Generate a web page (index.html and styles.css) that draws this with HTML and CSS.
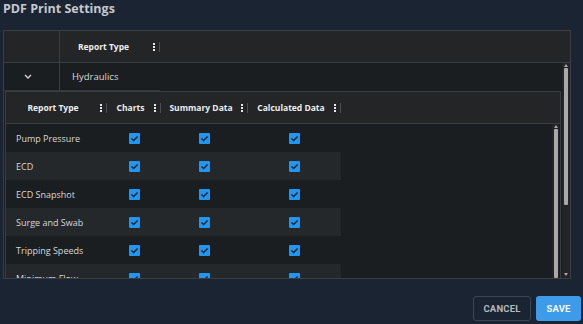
FILE: index.html
```html
<!DOCTYPE html>
<html>
<head>
<meta charset="utf-8">
<link rel="stylesheet" href="styles.css">
</head>
<body>
<h1 class="title">PDF Print Settings</h1>
<div class="outer">
  <div class="outer-head">
    <div class="ocell-exp"></div>
    <div class="hcell ocol-type"><span class="htext">Report Type</span><span class="menu"><i></i><i></i><i></i></span><span class="sep"></span></div>
  </div>
  <div class="outer-body">
    <div class="outer-view">
      <div class="hyd-row">
        <div class="ocell-exp chev"><svg width="8" height="5" viewBox="0 0 8 5"><path d="M1 1 L4 4 L7 1" fill="none" stroke="#d4d6d8" stroke-width="1.3"/></svg></div>
        <div class="ocell-name">Hydraulics</div>
      </div>
      <div class="detail">
        <div class="inner">
          <div class="inner-head">
            <div class="hcell c1"><span class="htext">Report Type</span><span class="menu"><i></i><i></i><i></i></span><span class="sep"></span></div>
            <div class="hcell c2"><span class="htext">Charts</span><span class="menu"><i></i><i></i><i></i></span><span class="sep"></span></div>
            <div class="hcell c3"><span class="htext">Summary Data</span><span class="menu"><i></i><i></i><i></i></span><span class="sep"></span></div>
            <div class="hcell c4"><span class="htext">Calculated Data</span><span class="menu"><i></i><i></i><i></i></span><span class="sep"></span></div>
          </div>
          <div class="inner-body">
            <div class="rows">
              <div class="row"><div class="cell c1">Pump Pressure</div><div class="cell c2"><span class="cb"></span></div><div class="cell c3"><span class="cb"></span></div><div class="cell c4"><span class="cb"></span></div></div>
              <div class="row alt"><div class="cell c1">ECD</div><div class="cell c2"><span class="cb"></span></div><div class="cell c3"><span class="cb"></span></div><div class="cell c4"><span class="cb"></span></div></div>
              <div class="row"><div class="cell c1">ECD Snapshot</div><div class="cell c2"><span class="cb"></span></div><div class="cell c3"><span class="cb"></span></div><div class="cell c4"><span class="cb"></span></div></div>
              <div class="row alt"><div class="cell c1">Surge and Swab</div><div class="cell c2"><span class="cb"></span></div><div class="cell c3"><span class="cb"></span></div><div class="cell c4"><span class="cb"></span></div></div>
              <div class="row"><div class="cell c1">Tripping Speeds</div><div class="cell c2"><span class="cb"></span></div><div class="cell c3"><span class="cb"></span></div><div class="cell c4"><span class="cb"></span></div></div>
              <div class="row alt"><div class="cell c1">Minimum Flow</div><div class="cell c2"><span class="cb"></span></div><div class="cell c3"><span class="cb"></span></div><div class="cell c4"><span class="cb"></span></div></div>
            </div>
            <div class="sbar inner-sbar">
              <span class="arr up"></span>
              <span class="thumb full"></span>
            </div>
          </div>
        </div>
      </div>
    </div>
    <div class="sbar outer-sbar">
      <span class="arr up"></span>
      <span class="thumb part"></span>
      <span class="track"></span>
      <span class="arr down"></span>
    </div>
  </div>
</div>
<div class="actions">
  <button class="btn cancel">CANCEL</button>
  <button class="btn save">SAVE</button>
</div>
</body>
</html>
```

FILE: styles.css
```css
* { box-sizing: border-box; }
html, body { margin: 0; padding: 0; }
body {
  width: 583px;
  height: 324px;
  overflow: hidden;
  background: #1a2432;
  font-family: "Open Sans", "Noto Sans", sans-serif;
  color: #d2d4d6;
}
.title {
  margin: 0;
  height: 30px;
  padding: 1px 0 0 3px;
  font-size: 12.5px;
  line-height: 16px;
  font-weight: 700;
  color: #c5c8cc;
}
.outer {
  margin-left: 3px;
  width: 568px;
  height: 249px;
  border: 1px solid #3a3d41;
  background: #1b1e20;
  display: flex;
  flex-direction: column;
  overflow: hidden;
}
.outer-head {
  height: 32px;
  flex: none;
  background: #232527;
  border-bottom: 1px solid #3a3d41;
  display: flex;
}
.ocell-exp {
  width: 56px;
  border-right: 1px solid #3a3d41;
  display: flex;
  align-items: center;
  justify-content: center;
}
.ocell-exp.chev { justify-content: flex-start; padding-left: 20px; }
.hcell {
  display: flex;
  align-items: center;
  font-size: 8.5px;
  font-weight: 700;
  color: #eceeef;
  height: 100%;
}
.htext { flex: 1; text-align: center; white-space: nowrap; }
.menu {
  width: 2px;
  display: flex;
  flex-direction: column;
  gap: 1px;
  margin-right: 4px;
}
.menu i { display: block; width: 2px; height: 2px; background: #e6e8ea; }
.sep { width: 1px; height: 10px; background: #4a4d51; }
.ocol-type { width: 100px; }
.ocol-type .htext { padding-right: 6px; }
.outer-body { flex: 1; display: flex; min-height: 0; }
.outer-view { flex: 1; display: flex; flex-direction: column; min-width: 0; }
.hyd-row {
  width: 156px;
  height: 28px;
  flex: none;
  display: flex;
  border-bottom: 1px solid #34373b;
}
.ocell-name {
  padding-left: 12px;
  display: flex;
  align-items: center;
  font-size: 9.5px;
  color: #d6d8da;
}
.detail { flex: 1; padding: 0 0 0 1px; min-height: 0; display: flex; }
.inner {
  width: 556px;
  border: 1px solid #3a3d41;
  border-bottom: none;
  display: flex;
  flex-direction: column;
  min-height: 0;
}
.inner-head {
  height: 32px;
  flex: none;
  background: #232527;
  border-bottom: 1px solid #3a3d41;
  display: flex;
}
.c1 { width: 101px; }
.c2 { width: 54px; }
.c3 { width: 87px; }
.c4 { width: 93px; }
.inner-body { flex: 1; display: flex; min-height: 0; overflow: hidden; background: #1b1e20; }
.rows { flex: 1; }
.row { display: flex; height: 28px; width: 335px; }
.row.alt { background: #25282a; }
.cell {
  display: flex;
  align-items: center;
  font-size: 9px;
  color: #d6d8da;
  white-space: nowrap;
}
.cell.c1 { padding-left: 10px; padding-top: 1px; }
.cell.c2, .cell.c3, .cell.c4 { justify-content: center; }
.cb {
  width: 11px;
  height: 11px;
  border-radius: 1px;
  background: #2196f3 url("data:image/svg+xml,%3Csvg xmlns='http://www.w3.org/2000/svg' width='11' height='11' viewBox='0 0 11 11'%3E%3Cpath d='M2.5 5.6 L4.6 7.6 L8.6 3.4' fill='none' stroke='%231b2230' stroke-width='1.4'/%3E%3C/svg%3E") no-repeat center;
}
.sbar {
  display: flex;
  flex-direction: column;
  align-items: center;
  background: #222426;
}
.inner-sbar { width: 7px; margin-right: 1px; padding-top: 1px; }
.outer-sbar { width: 8px; padding: 1px 0 2px; }
.arr { width: 0; height: 0; border-left: 2.5px solid transparent; border-right: 2.5px solid transparent; flex: none; }
.arr.up { border-bottom: 3px solid #a8a8a8; margin-bottom: 1px; }
.arr.down { border-top: 3px solid #a8a8a8; margin-top: 1px; }
.thumb { width: 4px; background: #a9a9a9; border-radius: 1px; }
.thumb.full { flex: 1; }
.thumb.part { height: 137px; flex: none; }
.track { flex: 1; }
.actions {
  display: flex;
  justify-content: flex-end;
  gap: 5px;
  padding: 17px 2px 0 0;
}
.btn {
  height: 25px;
  border-radius: 3px;
  font-family: Roboto, "Open Sans", sans-serif;
  font-size: 9.5px;
  font-weight: 700;
  letter-spacing: 0.2px;
  cursor: pointer;
}
.cancel {
  width: 58px;
  background: #1a2432;
  border: 1px solid #3b4553;
  color: #b4b8be;
}
.save {
  width: 45px;
  background: #3d9be9;
  border: none;
  color: #f2f7fc;
}
```
